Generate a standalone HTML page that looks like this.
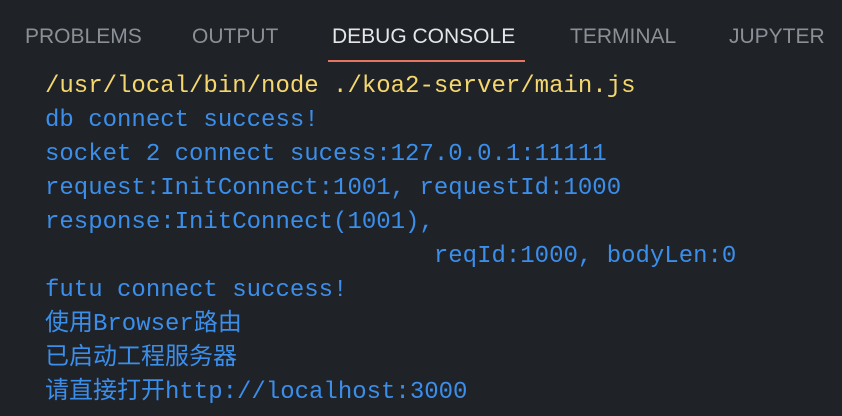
<!DOCTYPE html>
<html><head><meta charset="utf-8"><style>
html,body{margin:0;padding:0;background:#1f2227;width:842px;height:416px;overflow:hidden}
.tab{position:absolute;top:24px;font:21px "Liberation Sans",sans-serif;color:#8b9097;white-space:nowrap;line-height:26px}
.act{color:#e4e6e8}
.ul{position:absolute;left:328px;width:197px;top:60px;height:2px;background:#e8735f}
.con{position:absolute;left:45px;top:70px;font:24px "Liberation Mono","Noto Sans CJK SC",monospace;line-height:34px;color:#3b8eea;white-space:pre}
.y{color:#f5d76e}
</style></head><body>
<div class="tab" style="left:25px">PROBLEMS</div>
<div class="tab" style="left:192px">OUTPUT</div>
<div class="tab act" style="left:332px">DEBUG CONSOLE</div>
<div class="tab" style="left:570px">TERMINAL</div>
<div class="tab" style="left:729px">JUPYTER</div>
<div class="ul"></div>
<div class="con"><span class="y">/usr/local/bin/node ./koa2-server/main.js</span>
db connect success!
socket 2 connect sucess:127.0.0.1:11111
request:InitConnect:1001, requestId:1000
response:InitConnect(1001),
                           reqId:1000, bodyLen:0
futu connect success!
使用Browser路由
已启动工程服务器
请直接打开http://localhost:3000</div>
</body></html>
